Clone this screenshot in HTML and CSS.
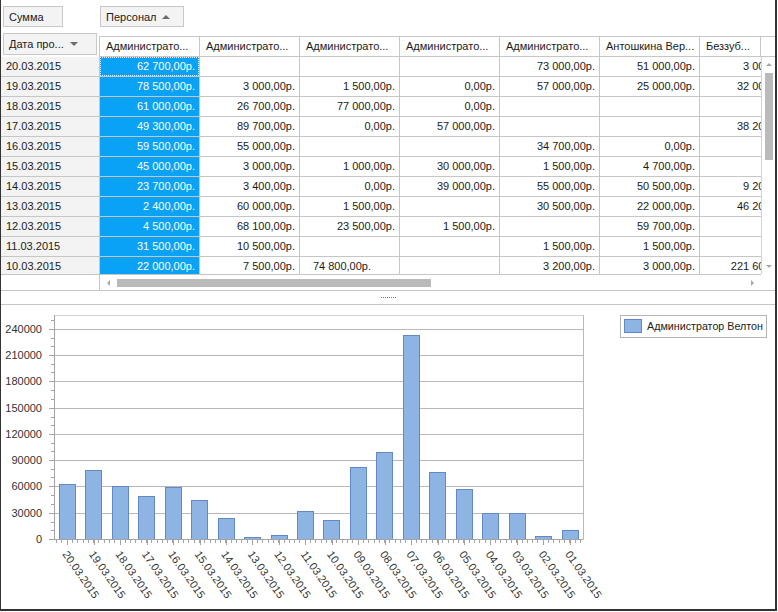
FILE: index.html
```html
<!DOCTYPE html>
<html lang="ru">
<head>
<meta charset="utf-8">
<title>Pivot</title>
<link rel="stylesheet" href="styles.css">
</head>
<body>
<div class="window">
  <div class="toolbar">
    <div class="field field-sum">Сумма</div>
    <div class="field field-staff">Персонал<span class="tri-up"></span></div>
  </div>

  <div class="grid">
    <div class="corner">
      <div class="field field-date">Дата про...<span class="tri-down"></span></div>
    </div>
    <div class="head">
      <div class="hcell">Администрато...</div>
      <div class="hcell">Администрато...</div>
      <div class="hcell">Администрато...</div>
      <div class="hcell">Администрато...</div>
      <div class="hcell">Администрато...</div>
      <div class="hcell">Антошкина Вер...</div>
      <div class="hcell hcell-last">Беззуб...</div>
      <div class="hfill"></div>
    </div>

    <div class="dates">
      <div class="dcell">20.03.2015</div>
      <div class="dcell">19.03.2015</div>
      <div class="dcell">18.03.2015</div>
      <div class="dcell">17.03.2015</div>
      <div class="dcell">16.03.2015</div>
      <div class="dcell">15.03.2015</div>
      <div class="dcell">14.03.2015</div>
      <div class="dcell">13.03.2015</div>
      <div class="dcell">12.03.2015</div>
      <div class="dcell">11.03.2015</div>
      <div class="dcell">10.03.2015</div>
    </div>

    <div class="viewport">
      <div class="row"><div class="cell sel focus">62 700,00р.</div><div class="cell"></div><div class="cell"></div><div class="cell"></div><div class="cell">73 000,00р.</div><div class="cell">51 000,00р.</div><div class="cell">3 000,00р.</div></div>
      <div class="row"><div class="cell sel">78 500,00р.</div><div class="cell">3 000,00р.</div><div class="cell">1 500,00р.</div><div class="cell">0,00р.</div><div class="cell">57 000,00р.</div><div class="cell">25 000,00р.</div><div class="cell">32 000,00р.</div></div>
      <div class="row"><div class="cell sel">61 000,00р.</div><div class="cell">26 700,00р.</div><div class="cell">77 000,00р.</div><div class="cell">0,00р.</div><div class="cell"></div><div class="cell"></div><div class="cell"></div></div>
      <div class="row"><div class="cell sel">49 300,00р.</div><div class="cell">89 700,00р.</div><div class="cell">0,00р.</div><div class="cell">57 000,00р.</div><div class="cell"></div><div class="cell"></div><div class="cell">38 200,00р.</div></div>
      <div class="row"><div class="cell sel">59 500,00р.</div><div class="cell">55 000,00р.</div><div class="cell"></div><div class="cell"></div><div class="cell">34 700,00р.</div><div class="cell">0,00р.</div><div class="cell"></div></div>
      <div class="row"><div class="cell sel">45 000,00р.</div><div class="cell">3 000,00р.</div><div class="cell">1 000,00р.</div><div class="cell">30 000,00р.</div><div class="cell">1 500,00р.</div><div class="cell">4 700,00р.</div><div class="cell"></div></div>
      <div class="row"><div class="cell sel">23 700,00р.</div><div class="cell">3 400,00р.</div><div class="cell">0,00р.</div><div class="cell">39 000,00р.</div><div class="cell">55 000,00р.</div><div class="cell">50 500,00р.</div><div class="cell">9 200,00р.</div></div>
      <div class="row"><div class="cell sel">2 400,00р.</div><div class="cell">60 000,00р.</div><div class="cell">1 500,00р.</div><div class="cell"></div><div class="cell">30 500,00р.</div><div class="cell">22 000,00р.</div><div class="cell">46 200,00р.</div></div>
      <div class="row"><div class="cell sel">4 500,00р.</div><div class="cell">68 100,00р.</div><div class="cell">23 500,00р.</div><div class="cell">1 500,00р.</div><div class="cell"></div><div class="cell">59 700,00р.</div><div class="cell"></div></div>
      <div class="row"><div class="cell sel">31 500,00р.</div><div class="cell">10 500,00р.</div><div class="cell"></div><div class="cell"></div><div class="cell">1 500,00р.</div><div class="cell">1 500,00р.</div><div class="cell"></div></div>
      <div class="row"><div class="cell sel">22 000,00р.</div><div class="cell">7 500,00р.</div><div class="cell cell-shift">74 800,00р.</div><div class="cell"></div><div class="cell">3 200,00р.</div><div class="cell">3 000,00р.</div><div class="cell">221 600,00р.</div></div>
    </div>

    <div class="vscroll">
      <span class="arr-up"></span>
      <span class="vthumb"></span>
      <span class="arr-down"></span>
    </div>

    <div class="hs-left"></div>
    <div class="hscroll">
      <span class="arr-left"></span>
      <span class="hthumb"></span>
      <span class="arr-right"></span>
    </div>
    <div class="hs-corner"></div>
  </div>

  <div class="splitter"><span class="grip"></span></div>

  <svg class="chart" width="774" height="304" viewBox="1 305 774 304" xmlns="http://www.w3.org/2000/svg">
    <!-- plot frame -->
    <path d="M54 315.5H583.5" stroke="#d6d6d6" fill="none"/>
    <path d="M583.5 315V539" stroke="#b8b8b8" fill="none"/>
    <!-- gridlines -->
    <path d="M54 513.5H583 M54 486.5H583 M54 460.5H583 M54 434.5H583 M54 408.5H583 M54 381.5H583 M54 355.5H583 M54 329.5H583" stroke="#b8b8b8" fill="none"/>
    <!-- bars -->
    <g fill="#8eb4e3" stroke="#6389c4">
      <rect x="59.5" y="484.5" width="16" height="55"/>
      <rect x="85.5" y="470.5" width="16" height="69"/>
      <rect x="112.5" y="486.5" width="16" height="53"/>
      <rect x="138.5" y="496.5" width="16" height="43"/>
      <rect x="165.5" y="487.5" width="16" height="52"/>
      <rect x="191.5" y="500.5" width="16" height="39"/>
      <rect x="218.5" y="518.5" width="16" height="21"/>
      <rect x="244.5" y="537.5" width="16" height="2"/>
      <rect x="271.5" y="535.5" width="16" height="4"/>
      <rect x="297.5" y="511.5" width="16" height="28"/>
      <rect x="323.5" y="520.5" width="16" height="19"/>
      <rect x="350.5" y="467.5" width="16" height="72"/>
      <rect x="376.5" y="452.5" width="16" height="87"/>
      <rect x="403.5" y="335.5" width="16" height="204"/>
      <rect x="429.5" y="472.5" width="16" height="67"/>
      <rect x="456.5" y="489.5" width="16" height="50"/>
      <rect x="482.5" y="513.5" width="16" height="26"/>
      <rect x="509.5" y="513.5" width="16" height="26"/>
      <rect x="535.5" y="536.5" width="16" height="3"/>
      <rect x="562.5" y="530.5" width="16" height="9"/>
    </g>
    <!-- axes -->
    <path d="M54.5 315V540" stroke="#a4a4a4" fill="none"/>
    <path d="M49 539.5H583.5" stroke="#a4a4a4" fill="none"/>
    <path d="M49 513.5H54 M49 486.5H54 M49 460.5H54 M49 434.5H54 M49 408.5H54 M49 381.5H54 M49 355.5H54 M49 329.5H54" stroke="#a4a4a4" fill="none"/>
    <path d="M51 320.5H54 M51 338.5H54 M51 346.5H54 M51 364.5H54 M51 372.5H54 M51 390.5H54 M51 399.5H54 M51 417.5H54 M51 425.5H54 M51 443.5H54 M51 451.5H54 M51 469.5H54 M51 477.5H54 M51 495.5H54 M51 504.5H54 M51 522.5H54 M51 530.5H54" stroke="#a4a4a4" fill="none"/>
    <line x1="56.1" y1="541" x2="583" y2="541" stroke="#a4a4a4" stroke-width="3" stroke-dasharray="1 4.29" shape-rendering="crispEdges"/>
    <path d="M67.5 539V545 M94.5 539V545 M120.5 539V545 M147.5 539V545 M173.5 539V545 M200.5 539V545 M226.5 539V545 M252.5 539V545 M279.5 539V545 M305.5 539V545 M332.5 539V545 M358.5 539V545 M385.5 539V545 M411.5 539V545 M438.5 539V545 M464.5 539V545 M490.5 539V545 M517.5 539V545 M543.5 539V545 M570.5 539V545" stroke="#a4a4a4" fill="none"/>
    <!-- y labels -->
    <g class="yl">
      <text x="42" y="539" dy=".35em">0</text>
      <text x="42" y="513" dy=".35em">30000</text>
      <text x="42" y="486" dy=".35em">60000</text>
      <text x="42" y="460" dy=".35em">90000</text>
      <text x="42" y="434" dy=".35em">120000</text>
      <text x="42" y="408" dy=".35em">150000</text>
      <text x="42" y="381" dy=".35em">180000</text>
      <text x="42" y="355" dy=".35em">210000</text>
      <text x="42" y="329" dy=".35em">240000</text>
    </g>
    <!-- x labels -->
    <g class="xl">
      <text transform="translate(65.2 552) rotate(55)" dy=".35em">20.03.2015</text>
      <text transform="translate(91.7 552) rotate(55)" dy=".35em">19.03.2015</text>
      <text transform="translate(118.1 552) rotate(55)" dy=".35em">18.03.2015</text>
      <text transform="translate(144.6 552) rotate(55)" dy=".35em">17.03.2015</text>
      <text transform="translate(171.0 552) rotate(55)" dy=".35em">16.03.2015</text>
      <text transform="translate(197.5 552) rotate(55)" dy=".35em">15.03.2015</text>
      <text transform="translate(223.9 552) rotate(55)" dy=".35em">14.03.2015</text>
      <text transform="translate(250.4 552) rotate(55)" dy=".35em">13.03.2015</text>
      <text transform="translate(276.8 552) rotate(55)" dy=".35em">12.03.2015</text>
      <text transform="translate(303.3 552) rotate(55)" dy=".35em">11.03.2015</text>
      <text transform="translate(329.7 552) rotate(55)" dy=".35em">10.03.2015</text>
      <text transform="translate(356.2 552) rotate(55)" dy=".35em">09.03.2015</text>
      <text transform="translate(382.6 552) rotate(55)" dy=".35em">08.03.2015</text>
      <text transform="translate(409.1 552) rotate(55)" dy=".35em">07.03.2015</text>
      <text transform="translate(435.5 552) rotate(55)" dy=".35em">06.03.2015</text>
      <text transform="translate(462.0 552) rotate(55)" dy=".35em">05.03.2015</text>
      <text transform="translate(488.4 552) rotate(55)" dy=".35em">04.03.2015</text>
      <text transform="translate(514.9 552) rotate(55)" dy=".35em">03.03.2015</text>
      <text transform="translate(541.3 552) rotate(55)" dy=".35em">02.03.2015</text>
      <text transform="translate(567.8 552) rotate(55)" dy=".35em">01.03.2015</text>
    </g>
    <!-- legend -->
    <rect x="620.5" y="315.5" width="146" height="22" fill="#fff" stroke="#b4b4b4"/>
    <rect x="624.5" y="319.5" width="17" height="13" fill="#8eb4e3" stroke="#6389c4"/>
    <text class="lg" x="647" y="326.5" dy=".35em" textLength="116" lengthAdjust="spacingAndGlyphs">Администратор Велтон</text>
  </svg>
</div>
</body>
</html>
```

FILE: styles.css
```css
* {
  box-sizing: border-box;
}

body {
  margin: 0;
  background: #fff;
  font-family: "Liberation Sans", Arial, sans-serif;
  font-size: 11px;
  color: #1b1b1b;
}

.window {
  width: 777px;
  height: 611px;
  border-left: 1px solid #333;
  border-right: 2px solid #333;
  border-bottom: 2px solid #333;
  display: flex;
  flex-direction: column;
  overflow: hidden;
}

/* toolbar with field buttons */
.toolbar {
  flex: none;
  height: 33px;
  display: flex;
  align-items: flex-start;
  gap: 37px;
  padding: 6px 0 0 2px;
}

.field {
  height: 21px;
  display: flex;
  align-items: center;
  padding: 0 5px;
  border: 1px solid #c8c8c8;
  background: #f3f3f3;
  white-space: nowrap;
}

.field-sum {
  width: 60px;
}

.field-staff {
  width: 84px;
}

.field-date {
  width: 94px;
  height: 22px;
}

.tri-up {
  width: 0;
  height: 0;
  margin-left: 5px;
  border-left: 4px solid transparent;
  border-right: 4px solid transparent;
  border-bottom: 4px solid #6b6b6b;
}

.tri-down {
  width: 0;
  height: 0;
  margin-left: 6px;
  border-left: 4px solid transparent;
  border-right: 4px solid transparent;
  border-top: 4px solid #6b6b6b;
}

/* pivot grid */
.grid {
  flex: none;
  display: grid;
  grid-template-columns: 99px 661px 14px;
  grid-template-rows: 24px 217px 17px;
}

.corner {
  padding-left: 2px;
}

.head {
  grid-column: 2 / 4;
  margin-left: -1px;
  margin-top: 3px;
  height: 21px;
  display: flex;
  border-top: 1px solid #c6c6c6;
  border-bottom: 1px solid #c6c6c6;
  border-left: 1px solid #c6c6c6;
  background: #fff;
}

.hcell {
  flex: none;
  width: 100px;
  padding-left: 6px;
  line-height: 19px;
  border-right: 1px solid #c6c6c6;
  white-space: nowrap;
  overflow: hidden;
}

.hcell-last {
  width: 61px;
}

.hfill {
  flex: 1;
}

.dates {
  overflow: hidden;
}

.dcell {
  height: 20px;
  padding-left: 5px;
  line-height: 19px;
  background: #f3f3f3;
  border-right: 1px solid #c6c6c6;
  border-bottom: 1px solid #c6c6c6;
}

.viewport {
  overflow: hidden;
}

.row {
  display: flex;
  width: 700px;
  height: 20px;
  border-bottom: 1px solid #c6c6c6;
}

.cell {
  flex: none;
  width: 100px;
  padding-right: 4px;
  line-height: 19px;
  text-align: right;
  white-space: nowrap;
  border-right: 1px solid #c6c6c6;
}

.cell-shift {
  padding-right: 28px;
}

.sel {
  background: #0aa2f5;
  color: #fff;
}

.focus {
  position: relative;
}

.focus::after {
  content: "";
  position: absolute;
  inset: 0;
  border: 1px dotted #e6f4ff;
}

/* scrollbars */
.vscroll {
  display: flex;
  flex-direction: column;
  align-items: flex-start;
  padding: 6px 0 6px 3px;
  border-left: 1px solid #d4d4d4;
}

.arr-up {
  margin-left: 1px;
  width: 0;
  height: 0;
  border-left: 3px solid transparent;
  border-right: 3px solid transparent;
  border-bottom: 3px solid #a8a8a8;
}

.vthumb {
  margin-top: 7px;
  width: 8px;
  height: 87px;
  background: #bababa;
}

.arr-down {
  margin-top: auto;
  margin-left: 1px;
  width: 0;
  height: 0;
  border-left: 3px solid transparent;
  border-right: 3px solid transparent;
  border-top: 3px solid #a8a8a8;
}

.hs-left {
  border-top: 1px solid #c6c6c6;
  border-bottom: 1px solid #c6c6c6;
  border-right: 1px solid #c6c6c6;
}

.hscroll {
  display: flex;
  align-items: center;
  padding: 0 7px;
  border-top: 1px solid #c6c6c6;
  border-bottom: 1px solid #c6c6c6;
}

.hs-corner {
  border-bottom: 1px solid #c6c6c6;
}

.arr-left {
  width: 0;
  height: 0;
  border-top: 3px solid transparent;
  border-bottom: 3px solid transparent;
  border-right: 3px solid #a8a8a8;
}

.hthumb {
  margin-left: 7px;
  width: 314px;
  height: 8px;
  background: #bababa;
}

.arr-right {
  margin-left: auto;
  width: 0;
  height: 0;
  border-top: 3px solid transparent;
  border-bottom: 3px solid transparent;
  border-left: 3px solid #a8a8a8;
}

/* splitter */
.splitter {
  flex: none;
  height: 14px;
  display: flex;
  align-items: center;
  justify-content: center;
  border-bottom: 1px solid #c6c6c6;
}

.grip {
  width: 15px;
  height: 1px;
  background: repeating-linear-gradient(to right, #7a7a7a 0 1px, transparent 1px 2px);
}

/* chart */
.chart {
  display: block;
  flex: none;
}

.chart text {
  font-family: "Liberation Sans", Arial, sans-serif;
  font-size: 11px;
  fill: #333;
}

.chart .yl text {
  text-anchor: end;
}

.chart .lg {
  fill: #222;
}
```
